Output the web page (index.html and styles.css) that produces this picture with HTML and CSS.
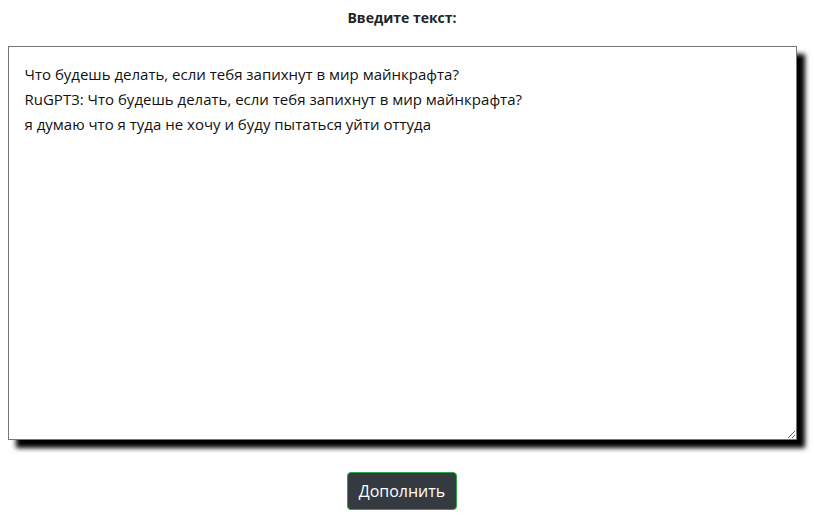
FILE: index.html
```html
<!DOCTYPE html>
<html lang="ru">
<head>
    <meta charset="UTF-8">
    <title>RuGPT3</title>
    <link rel="stylesheet" href="styles.css">
</head>
<body>
    <div class="form">
        <label class="title" for="prompt">Введите текст:</label>
        <textarea id="prompt">Что будешь делать, если тебя запихнут в мир майнкрафта?
RuGPT3: Что будешь делать, если тебя запихнут в мир майнкрафта?
я думаю что я туда не хочу и буду пытаться уйти оттуда</textarea>
        <button class="btn">Дополнить</button>
    </div>
</body>
</html>
```

FILE: styles.css
```css
body {
    margin: 0;
    font-family: "Open Sans", "Noto Sans", sans-serif;
    color: #212529;
    background: #fff;
}
.form {
    width: 790px;
    margin-left: 7px;
    display: flex;
    flex-direction: column;
    align-items: center;
}
.title {
    font-weight: bold;
    font-size: 14px;
    margin-top: 8px;
    height: 38px;
}
textarea {
    box-sizing: border-box;
    width: 789px;
    height: 394px;
    border: 1px solid #767676;
    padding: 15px 16px;
    font-family: "Open Sans", "Noto Sans", sans-serif;
    font-size: 15px;
    line-height: 25px;
    color: #111;
    box-shadow: 8px 8px 5px #000;
    resize: both;
}
.btn {
    margin-top: 32px;
    background-color: #343a40;
    color: #fff;
    border: 1px solid #28a745;
    border-radius: 4px;
    font-family: "Open Sans", "Noto Sans", sans-serif;
    font-size: 16px;
    padding: 7px 11px;
}
```
